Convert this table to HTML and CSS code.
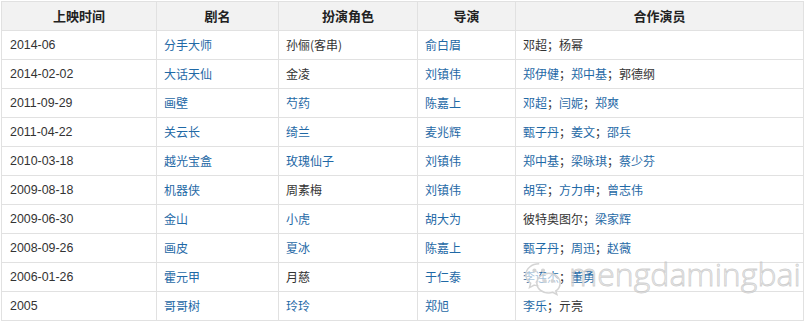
FILE: index.html
```html
<!DOCTYPE html>
<html lang="zh-CN">
<head>
<meta charset="utf-8">
<link rel="stylesheet" href="styles.css">
</head>
<body>
<div class="wrap">
<table class="films">
  <colgroup>
    <col class="c1"><col class="c2"><col class="c3"><col class="c4"><col class="c5">
  </colgroup>
  <thead>
    <tr><th>上映时间</th><th>剧名</th><th>扮演角色</th><th>导演</th><th>合作演员</th></tr>
  </thead>
  <tbody>
    <tr><td>2014-06</td><td><a>分手大师</a></td><td>孙俪(客串)</td><td><a>俞白眉</a></td><td>邓超；杨幂</td></tr>
    <tr><td>2014-02-02</td><td><a>大话天仙</a></td><td>金凌</td><td><a>刘镇伟</a></td><td><a>郑伊健</a>；<a>郑中基</a>；郭德纲</td></tr>
    <tr><td>2011-09-29</td><td><a>画壁</a></td><td><a>芍药</a></td><td><a>陈嘉上</a></td><td><a>邓超</a>；<a>闫妮</a>；<a>郑爽</a></td></tr>
    <tr><td>2011-04-22</td><td><a>关云长</a></td><td><a>绮兰</a></td><td><a>麦兆辉</a></td><td><a>甄子丹</a>；<a>姜文</a>；<a>邵兵</a></td></tr>
    <tr><td>2010-03-18</td><td><a>越光宝盒</a></td><td><a>玫瑰仙子</a></td><td><a>刘镇伟</a></td><td><a>郑中基</a>；<a>梁咏琪</a>；<a>蔡少芬</a></td></tr>
    <tr><td>2009-08-18</td><td><a>机器侠</a></td><td>周素梅</td><td><a>刘镇伟</a></td><td><a>胡军</a>；<a>方力申</a>；<a>曾志伟</a></td></tr>
    <tr><td>2009-06-30</td><td><a>金山</a></td><td><a>小虎</a></td><td><a>胡大为</a></td><td>彼特奥图尔；<a>梁家辉</a></td></tr>
    <tr><td>2008-09-26</td><td><a>画皮</a></td><td><a>夏冰</a></td><td><a>陈嘉上</a></td><td><a>甄子丹</a>；<a>周迅</a>；<a>赵薇</a></td></tr>
    <tr><td>2006-01-26</td><td><a>霍元甲</a></td><td>月慈</td><td><a>于仁泰</a></td><td><a>李连杰</a>；<a>董勇</a></td></tr>
    <tr><td>2005</td><td><a>哥哥树</a></td><td><a>玲玲</a></td><td><a>郑旭</a></td><td><a>李乐</a>；亓亮</td></tr>
  </tbody>
</table>
<div class="watermark">
  <svg class="wm-icon" width="38" height="38" viewBox="0 0 40 40" stroke="#d4d4d4" stroke-width="1.6">
    <path fill="rgba(255,255,255,0.6)" d="M16 3C8 3 2 8 2 14.5c0 3.6 1.9 6.8 5 8.9L5.8 28l5-2.6c1.6.5 3.3.7 5.2.7"/>
    <path fill="rgba(255,255,255,0.6)" d="M26 13c-7 0-12.5 4.6-12.5 10.3S19 33.6 26 33.6c1.5 0 3-.2 4.3-.6l4.3 2.3-1.1-3.8c2.8-1.9 4.5-4.7 4.5-8.2C38 17.6 33 13 26 13z"/>
    <circle cx="11" cy="10" r="1.4" fill="#d4d4d4"/>
    <circle cx="20" cy="10" r="1.4" fill="#d4d4d4"/>
    <circle cx="22" cy="21" r="1.2" fill="#d4d4d4"/>
    <circle cx="30" cy="21" r="1.2" fill="#d4d4d4"/>
  </svg>
  <span class="wm-text">mengdamingbai</span>
</div>
</div>
</body>
</html>
```
FILE: styles.css
```css
html, body {
  margin: 0;
  padding: 0;
  background: #fff;
}
.wrap {
  position: relative;
  padding: 1px 0 0 1px;
}
.films {
  border-collapse: collapse;
  width: 803px;
  table-layout: fixed;
  font-family: "Noto Sans CJK SC", "Liberation Sans", sans-serif;
  font-size: 12px;
  color: #333;
}
.c1 { width: 155px; }
.c2 { width: 122px; }
.c3 { width: 139px; }
.c4 { width: 98px; }
.c5 { width: auto; }
.films th, .films td {
  border: 1px solid #e1e1e1;
  height: 29px;
  padding: 0 7px;
  box-sizing: border-box;
  white-space: nowrap;
  line-height: 18px;
}
.films th {
  background: #f2f2f2;
  font-weight: bold;
  font-size: 13px;
  text-align: center;
  color: #222;
}
.films td {
  text-align: left;
}
.films td:first-child {
  font-family: "Liberation Sans", sans-serif;
  font-size: 12.4px;
  padding-left: 8px;
}
.films a {
  color: #1f69a6;
  text-decoration: none;
}
.watermark {
  position: absolute;
  left: 524px;
  top: 261px;
  display: flex;
  align-items: flex-start;
  gap: 7px;
  white-space: nowrap;
  pointer-events: none;
}
.wm-icon {
  display: block;
}
.wm-text {
  font-family: "Open Sans", "DejaVu Sans", sans-serif;
  font-weight: 300;
  font-size: 32px;
  line-height: 32px;
  margin-top: -3px;
  color: rgba(220, 220, 220, 0.5);
  -webkit-text-stroke: 0.8px rgba(195, 195, 195, 0.75);
}
```
